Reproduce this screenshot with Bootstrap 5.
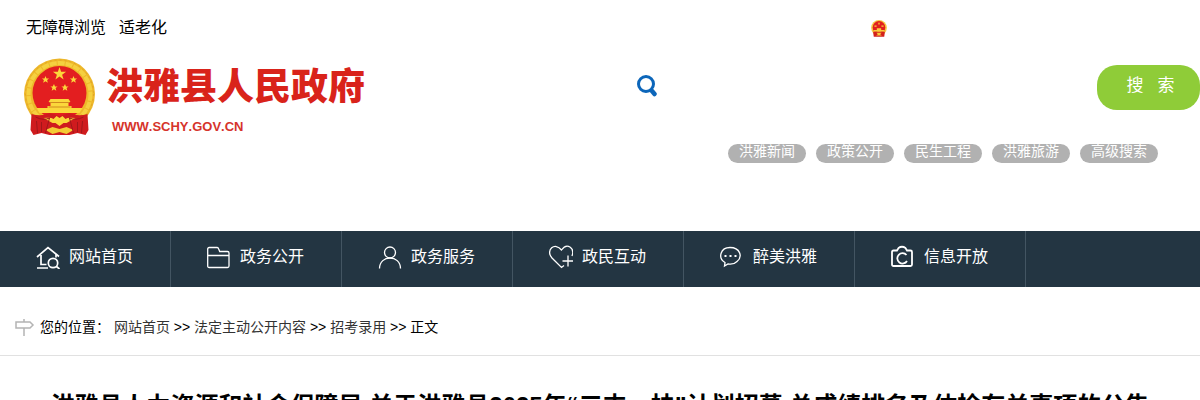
<!DOCTYPE html>
<html lang="zh-CN">
<head>
<meta charset="utf-8">
<meta name="viewport" content="width=device-width, initial-scale=1">
<title>洪雅县人民政府</title>
<link href="https://cdn.jsdelivr.net/npm/bootstrap@5.3.0/dist/css/bootstrap.min.css" rel="stylesheet">
<style>
body{font-family:"Liberation Sans","Noto Sans CJK SC",sans-serif;font-size:16px;line-height:24px;color:#000;background:#fff;height:100vh;overflow:hidden}
a{color:inherit;text-decoration:none}
.topbar{padding:16px 26px 0;height:56px}
.tools{gap:13px}
.topbar-mark{margin-right:287px}
.brand-row{padding-left:23px;height:175px}
.brand-emblem{margin-top:2px}
.brand-text{padding-left:10px}
.brand-name{font-size:37px;line-height:40px;font-weight:900;color:#d9231a;margin-top:12px}
.brand-url{font-family:"Liberation Sans",sans-serif;font-size:13px;line-height:16px;font-weight:700;color:#d6342b;margin:11px 0 0 6px;font-kerning:none}
.search-area{width:563px;padding-top:9px}
.search-icon{margin-bottom:4px}
.search-area .form-control{font-size:16px;height:45px;box-shadow:none}
.btn-search{width:103px;height:45px;border:0;border-radius:20px;background:#8fcc38;color:#fff;font-size:17px;line-height:24px;padding:0 0 4px 4px;white-space:pre}
.hot-links{margin-top:34px;padding-right:42px;gap:10px}
.hot-links a{width:78px;height:19px;border-radius:10px;background:#b1b1b1;color:#fff;font-size:14px;line-height:15px;text-align:center}
.main-nav{background:#233542;height:56px}
.main-nav a{width:171px;height:56px;padding:0 0 4px 36px;gap:9px;color:#fff;border-right:1px solid #435562}
.main-nav svg{width:24px;height:24px;fill:none;stroke:#fff;stroke-width:1.3;flex:none}
.crumbs{font-size:14px;line-height:20px;padding:30px 15px 18px;gap:5px;border-bottom:1px solid #e1e1e1}
.crumbs svg{margin-top:2px}
.crumbs a{color:#333}
.article-title{font-size:24px;line-height:36px;font-weight:700;margin:32px 0 0;text-align:center}
</style>
</head>
<body>
<svg class="d-none" aria-hidden="true">
<symbol id="emblem" viewBox="0 0 72 78">
<circle cx="36" cy="36" r="35.5" fill="#eeb82a"/>
<circle cx="36" cy="36" r="31" fill="none" stroke="#f5d040" stroke-width="4" stroke-dasharray="7 1"/>
<circle cx="36" cy="36" r="34" fill="none" stroke="#e0a528" stroke-dasharray="2 3"/>
<circle cx="36" cy="35" r="27" fill="#e31e20"/>
<path d="M8 56q10 3 18-1l10 3 10-3q8 4 18 1l1 16-3 5-8-2-8 2H26l-8-2-8 2-3-5z" fill="#cf1b1e"/>
<g fill="#fbd83b"><path d="M36 9l1.6 4.700h5l-4 3 1.500 4.800-4.100-3-4.100 3 1.500-4.800-4-3h5z"/>
<path d="M22 18l1 2.400h2.600l-2 1.700.7 2.600-2.300-1.500-2.300 1.500.7-2.600-2-1.700H21zM50 18l1 2.400h2.600l-2 1.700.7 2.600-2.300-1.500-2.300 1.500.7-2.600-2-1.700H49zM30.500 26l1 2.400h2.600l-2 1.700.7 2.600-2.300-1.500-2.300 1.500.7-2.600-2-1.700h2.300zM41.500 26l1 2.400h2.600l-2 1.700.7 2.600-2.300-1.500-2.300 1.500.7-2.600-2-1.700h2.300z"/>
<path d="M27 41h18l2 3h-2v4h3v2h11l-3 5H16l-3-5h11v-2h3v-4h-2z"/></g>
<path d="M26 44.500h20M25 49h22" stroke="#d18b1e"/>
<path d="M20 60q8-1 10 1l3-3 3 2 3-2 3 3q2-2 10-1l-9 5h-3l-4 3-4-3h-3z" fill="#fbd83b"/>
<path d="M22 72l7-3 7 2 7-2 7 3-7 4-7-2-7 2z" fill="#f4cc35"/>
<path d="M12 59q8 4 14 1l-4 15M60 59q-8 4-14 1l4 15M13 63l1 12M59 63l-1 12M18 64v10M54 64v10" stroke="#a0171a" fill="none"/>
</symbol>
</svg>

<header>
<div class="topbar d-flex justify-content-between align-items-start">
<div class="tools d-flex"><a href="#">无障碍浏览</a><a href="#">适老化</a></div>
<svg class="topbar-mark mt-1" width="16" height="17" viewBox="0 0 72 78" role="img" aria-label="国徽"><circle cx="36" cy="36" r="36" fill="#f6c93f"/><circle cx="36" cy="34" r="29" fill="#e1201c"/><path d="M36 9l4 9-4 4-4-4zM15 25h10v6H15zM47 25h10v6H47zM26 38h20v8h15v8H11v-8h15z" fill="#f8ce3c"/><path d="M9 54h18l9 7 9-7h18l-3 23H12z" fill="#d3211c"/><path d="M24 58h24l-7 7 8 6H23l8-6z" fill="#f6cc3a"/></svg>
</div>
<div class="brand-row d-flex justify-content-between align-items-start">
<a href="#" class="d-flex">
<svg width="73" height="78" class="brand-emblem flex-shrink-0" role="img" aria-label="国徽"><use href="#emblem"/></svg>
<span class="brand-text d-flex flex-column"><span class="brand-name text-nowrap">洪雅县人民政府</span><span class="brand-url">WWW.SCHY.GOV.CN</span></span>
</a>
<div class="search-area">
<form class="d-flex align-items-center" onsubmit="return false">
<label for="q" class="search-icon flex-shrink-0 lh-1"><svg width="21" height="22" viewBox="0 0 21 22" fill="none" stroke="#0c66ba" role="img" aria-label="搜索"><circle cx="9" cy="9" r="7.500" stroke-width="3"/><path d="M15 16l2.500 3" stroke-width="4.500" stroke-linecap="round"/></svg></label>
<input id="q" type="text" class="form-control border-0">
<button class="btn-search flex-shrink-0" type="submit">搜   索</button>
</form>
<nav class="hot-links d-flex justify-content-end" aria-label="热门搜索"><a href="#">洪雅新闻</a><a href="#">政策公开</a><a href="#">民生工程</a><a href="#">洪雅旅游</a><a href="#">高级搜索</a></nav>
</div>
</div>
</header>

<nav class="main-nav d-flex" aria-label="主导航">
<a href="#" class="d-flex align-items-center"><svg viewBox="0 0 24 24"><g stroke-width="1.700"><path d="M1 12L12 2.500l11 9M5 10v9.500h5.500M1 23h11M20 9.500v3"/><circle cx="17" cy="18" r="4.700"/><path d="M20.500 21.500l3 2.500"/></g></svg>网站首页</a>
<a href="#" class="d-flex align-items-center"><svg viewBox="0 0 24 24"><path d="M.7 21V4q0-1.500 1.500-1.500h8q1 0 1.500 1.500l1 2.500H20.500q1.500 0 1.500 1.500v13q0 1.500-1.500 1.500H2.200Q.7 22.500.7 21zM.7 10.500h21.300"/></svg>政务公开</a>
<a href="#" class="d-flex align-items-center"><svg viewBox="0 0 24 24"><circle cx="12" cy="7.500" r="5.500"/><path d="M1.500 23.500C1.500 9.500 22.500 9.500 22.500 23.500"/></svg>政务服务</a>
<a href="#" class="d-flex align-items-center"><svg viewBox="0 0 24 24"><path d="M15 20.500L12.500 22.500 3 13C-4 5 6-3.500 12.500 5 18-3 26 3 23 11M19 10.500v11M13.500 16h11"/></svg>政民互动</a>
<a href="#" class="d-flex align-items-center"><svg viewBox="0 0 24 24"><path d="M5 17.500C-2.500 13 .5 2.500 10 2.500c10 0 13 9 7 14-2.500 2.500-6 3-9 2.500L4.500 21z"/><path d="M4.500 11h2M9.500 11h2M14.500 11h2" stroke-width="2"/></svg>醉美洪雅</a>
<a href="#" class="d-flex align-items-center"><svg viewBox="0 0 24 24"><g stroke-width="1.800"><path d="M2.500 5.500h3.500l1.500-2.500q3.500-2.500 7 0l1.500 2.500h3.500q1.500 0 1.500 1.500v12.500q0 1.500-1.500 1.500h-17Q1 21 1 19.500V7q0-1.500 1.500-1.500z"/><path d="M15.500 10a5.200 5.200 0 1 0 .5 6"/></g></svg>信息开放</a>
</nav>

<nav class="crumbs d-flex align-items-center" aria-label="您的位置">
<svg width="20" height="18" viewBox="0 0 20 18" class="flex-shrink-0" fill="none" stroke="#b4b4b4" stroke-width="1.500" aria-hidden="true"><path d="M1 3h14l3 3-3 3H1zM9 0v3M9 9v8"/></svg>
<div class="text-nowrap">您的位置：&nbsp;<a href="#">网站首页</a> &gt;&gt; <a href="#">法定主动公开内容</a> &gt;&gt; <a href="#">招考录用</a> &gt;&gt; 正文</div>
</nav>

<main><h1 class="article-title">洪雅县人力资源和社会保障局 关于洪雅县2025年“三支一扶”计划招募 总成绩排名及体检有关事项的公告</h1></main>
<script src="https://cdn.jsdelivr.net/npm/bootstrap@5.3.0/dist/js/bootstrap.bundle.min.js"></script>
</body>
</html>
